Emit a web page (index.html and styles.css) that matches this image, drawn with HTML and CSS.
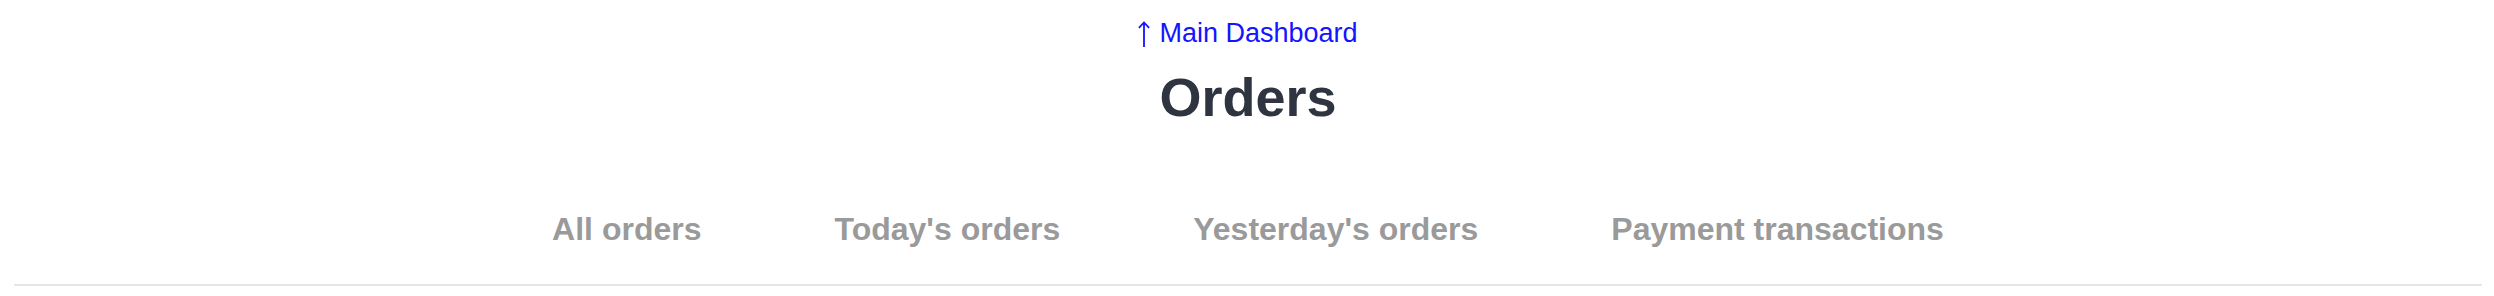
FILE: index.html
```html
<!DOCTYPE html>
<html lang="en">
<head>
<meta charset="utf-8">
<title>Orders</title>
<link rel="stylesheet" href="styles.css">
</head>
<body>
<header class="page-header">
  <a class="back-link" href="#"><svg class="up-arrow" width="12" height="26" viewBox="0 0 12 26" aria-hidden="true"><path d="M6 1.5V26M0.9 6.8L6 1.5L11.1 6.8" fill="none" stroke="currentColor" stroke-width="1.8"/></svg>Main Dashboard</a>
  <h1 class="title">Orders</h1>
  <nav class="tabs">
    <a class="tab" href="#">All orders</a>
    <a class="tab" href="#">Today's orders</a>
    <a class="tab" href="#">Yesterday's orders</a>
    <a class="tab" href="#">Payment transactions</a>
  </nav>
</header>
</body>
</html>
```
FILE: styles.css
```css
html, body {
  background: #ffffff;
}
body {
  margin: 8px;
  font-family: "Liberation Sans", Arial, Helvetica, sans-serif;
}
.page-header {
  display: flex;
  flex-direction: column;
  align-items: center;
  padding-top: 10px;
  margin: 0 4px 0 6px;
  border-bottom: 2px solid #e6e6e6;
}
.back-link {
  font-size: 27px;
  line-height: 31px;
  color: #1414ff;
  text-decoration: none;
}
.up-arrow {
  vertical-align: -5px;
  margin-right: 9px;
}
.title {
  margin: 17px 0 0;
  font-size: 54px;
  line-height: 62px;
  font-weight: 700;
  color: #2e3440;
}
.tabs {
  display: flex;
  gap: 133px;
  margin-top: 84px;
  padding-bottom: 37px;
}
.tab {
  font-size: 32px;
  line-height: 35px;
  font-weight: 700;
  color: #9a9a9a;
  text-decoration: none;
}
```
